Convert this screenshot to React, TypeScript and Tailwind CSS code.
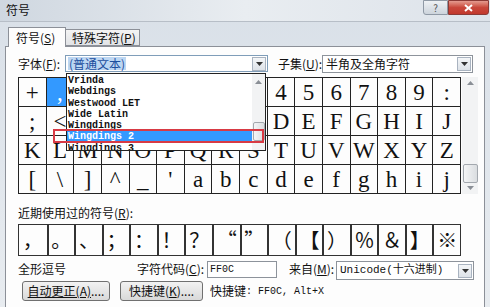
const cjk = { fontFamily: '"Noto Sans CJK SC", "Liberation Sans", sans-serif' };
const mono = { fontFamily: '"Liberation Mono", "Noto Sans CJK SC", monospace' };
const serif = { fontFamily: '"Liberation Serif", "DejaVu Serif", serif' };

const gridRows: string[][] = [
  ["+", ",", "-", ".", "/", "0", "1", "2", "3", "4", "5", "6", "7", "8", "9", ":"],
  [";", "<", "=", ">", "?", "@", "A", "B", "C", "D", "E", "F", "G", "H", "I", "J"],
  ["K", "L", "M", "N", "O", "P", "Q", "R", "S", "T", "U", "V", "W", "X", "Y", "Z"],
  ["[", "\\", "]", "^", "_", "'", "a", "b", "c", "d", "e", "f", "g", "h", "i", "j"],
];

const recent = ["，", "。", "、", "；", "：", "！", "？", "“", "”", "（", "【", "）", "％", "＆", "】", "※"];

const fonts = ["Vrinda", "Webdings", "Westwood LET", "Wide Latin", "Wingdings", "Wingdings 2", "Wingdings 3"];

const Arrow = () => (
  <div className="w-[14px] h-[14px] shrink-0 border border-[#a9b3c0] bg-gradient-to-b from-[#f4f6f8] to-[#dde2e8] flex items-center justify-center">
    <svg width="7" height="4" viewBox="0 0 7 4">
      <path d="M0 0h7L3.5 4z" fill="#333" />
    </svg>
  </div>
);

const ScrollArrow = ({ up }: { up?: boolean }) => (
  <svg width="7" height="4" viewBox="0 0 7 4">
    <path d={up ? "M0 4h7L3.5 0z" : "M0 0h7L3.5 4z"} fill="#8a8f96" />
  </svg>
);

export default function App() {
  return (
    <div className="relative w-[490px] h-[307px] overflow-hidden bg-gradient-to-b from-[#d9e0e8] to-[#e8ecf0] text-[12px] text-[#111]" style={cjk}>
      {/* title bar */}
      <div className="h-[22px] flex items-start justify-between bg-gradient-to-r from-[#cfd7e0] via-[#e9edf1] to-[#dde3ea] border-b border-[#b7bec7]">
        <div className="pl-[6px] pt-[3px] leading-[14px] text-[12px]">符号</div>
        <div className="flex mr-[1px]">
          <div className="w-[25px] h-[15px] border border-[#8f99a5] rounded-bl-[3px] bg-gradient-to-b from-[#eef1f4] to-[#cdd4dc] flex items-center justify-center text-[10px] leading-none text-[#555]">?</div>
          <div className="w-[41px] h-[15px] border border-[#8b3a36] rounded-br-[3px] bg-gradient-to-b from-[#e49a8f] via-[#c9473b] to-[#c1382c] flex items-center justify-center">
            <svg width="9" height="8" viewBox="0 0 9 8">
              <path d="M1 1l7 6M8 1L1 7" stroke="#fff" strokeWidth="2" />
            </svg>
          </div>
        </div>
      </div>

      <div className="px-[5px] pt-[6px]">
        {/* tabs */}
        <div className="flex items-end h-[18px] pl-[3px]">
          <div className="h-[20px] w-[58px] -mb-[1px] border border-[#8c9098] border-b-0 bg-[#fdfdfd] flex items-center pl-[7px] relative z-10 whitespace-nowrap">
            符号(<span className="underline">S</span>)
          </div>
          <div className="h-[17px] w-[74px] border border-[#8c9098] border-l-0 bg-gradient-to-b from-[#f4f4f4] to-[#e1e3e6] flex items-center pl-[6px] whitespace-nowrap">
            特殊字符(<span className="underline">P</span>)
          </div>
        </div>

        {/* panel */}
        <div className="h-[270px] border border-[#8c9098] bg-[#fdfdfd] pl-[12px] pt-[8px]">
          {/* font row */}
          <div className="flex items-center h-[17px] whitespace-nowrap">
            <div className="w-[47px] shrink-0">字体(<span className="underline">F</span>):</div>
            <div className="w-[203px] shrink-0 h-[17px] border border-[#7f9db9] bg-white flex items-center justify-between pl-[2px] pr-[1px]">
              <span className="bg-[#bcd6f2] text-[#1c4e9e] px-[1px] leading-[13px]">(普通文本)</span>
              <Arrow />
            </div>
            <div className="w-[54px] shrink-0 pl-[10px]">子集(<span className="underline">U</span>):</div>
            <div className="w-[151px] shrink-0 h-[18px] border border-[#8d939b] bg-white flex items-center justify-between pl-[3px] pr-[1px]">
              <span>半角及全角字符</span>
              <Arrow />
            </div>
          </div>

          {/* symbol grid */}
          <div className="flex mt-[5px]">
            <div className="w-[443px] border-t border-l border-[#222]">
              {gridRows.map((row, r) => (
                <div key={r} className="grid grid-cols-16 h-[29px]">
                  {row.map((ch, c) => (
                    <div
                      key={c}
                      className={`border-r border-b border-[#222] flex items-center justify-center text-[23px] leading-none ${r === 0 && c === 1 ? "bg-[#3399ff] text-white" : ""}`}
                      style={serif}
                    >
                      {ch}
                    </div>
                  ))}
                </div>
              ))}
            </div>
            <div className="w-[16px] h-[117px] ml-[1px] bg-[#f2f3f4] flex flex-col items-center justify-between py-[4px]">
              <ScrollArrow up />
              <div className="flex-1" />
              <div className="w-[15px] h-[19px] mb-[3px] border border-[#a3a8ae] rounded-[2px] bg-gradient-to-r from-[#f4f5f6] to-[#dadde0]" />
              <ScrollArrow />
            </div>
          </div>

          {/* recent */}
          <div className="mt-[12px] leading-[14px] whitespace-nowrap">近期使用过的符号(<span className="underline">R</span>):</div>
          <div className="mt-[4px] w-[443px] h-[32px] border border-[#333] grid grid-cols-16">
            {recent.map((ch, i) => (
              <div
                key={i}
                className={`flex items-center justify-center text-[20px] leading-none ${i > 0 ? "border-l-2 border-[#333]" : ""}`}
                style={{ fontFamily: '"Noto Sans CJK SC", "Liberation Serif", serif' }}
              >
                {ch}
              </div>
            ))}
          </div>

          {/* code row */}
          <div className="flex items-center h-[18px] mt-[4px] whitespace-nowrap">
            <div className="w-[119px] shrink-0">全形逗号</div>
            <div className="w-[70px] shrink-0">字符代码(<span className="underline">C</span>):</div>
            <div className="w-[70px] shrink-0 h-[17px] border border-[#8d939b] bg-white flex items-center pl-[2px] text-[10px]" style={mono}>
              FF0C
            </div>
            <div className="w-[59px] shrink-0 pl-[12px]">来自(<span className="underline">M</span>):</div>
            <div className="w-[138px] shrink-0 h-[19px] mt-[3px] border border-[#8d939b] bg-white flex items-center justify-between pl-[3px] pr-[1px]">
              <span className="text-[11px]" style={mono}>Unicode(十六进制)</span>
              <Arrow />
            </div>
          </div>

          {/* buttons */}
          <div className="flex items-center mt-[3px] h-[20px] whitespace-nowrap">
            <div className="ml-[4px] w-[88px] h-[20px] border border-[#707070] rounded-[3px] bg-gradient-to-b from-[#f2f2f2] to-[#d9d9d9] flex items-center justify-center">
              <span className="underline">自动更正(A)</span>....
            </div>
            <div className="ml-[10px] w-[83px] h-[20px] border border-[#707070] rounded-[3px] bg-gradient-to-b from-[#f2f2f2] to-[#d9d9d9] flex items-center justify-center">
              快捷键(<span className="underline">K</span>)....
            </div>
            <div className="ml-[7px] flex items-center">
              快捷键<span className="text-[10px]" style={mono}>: FF0C, Alt+X</span>
            </div>
          </div>
        </div>
      </div>

      {/* open font dropdown */}
      <div className="absolute left-[66px] top-[73px] w-[200px] h-[78px] border border-[#222] bg-white flex overflow-hidden">
        <div className="flex-1 pt-[1px]">
          {fonts.map((f) => (
            <div
              key={f}
              className={`h-[11.3px] leading-[11.3px] pl-[1px] text-[10px] font-bold whitespace-pre ${f === "Wingdings 2" ? "bg-[#3399ff] text-white" : "text-[#111]"}`}
              style={mono}
            >
              {f}
            </div>
          ))}
        </div>
        <div className="w-[13px] bg-[#f2f3f4] flex flex-col items-center pt-[6px]">
          <ScrollArrow up />
          <div className="h-[38px]" />
          <div className="w-[12px] h-[19px] border border-[#a3a8ae] rounded-[2px] bg-gradient-to-r from-[#f4f5f6] to-[#dadde0]" />
        </div>
      </div>

      {/* red highlight box */}
      <div className="absolute left-[53px] top-[129px] w-[211px] h-[14px] border-2 border-[#d83a44]" />
    </div>
  );
}
